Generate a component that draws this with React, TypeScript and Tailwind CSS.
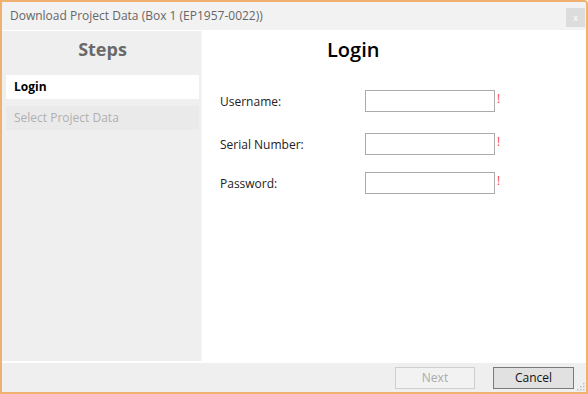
import React from 'react';

const fields = [
  { label: 'Username:', mt: 'mt-0' },
  { label: 'Serial Number:', mt: 'mt-[21px]' },
  { label: 'Password:', mt: 'mt-[17px]' },
];

const App: React.FC = () => {
  return (
    <div
      className="w-[588px] h-[394px] bg-white border-2 border-[#f0b070] rounded-tr-[4px] flex flex-col overflow-hidden"
      style={{ fontFamily: '"Open Sans", "Noto Sans", sans-serif' }}
    >
      {/* title bar */}
      <div className="h-[29px] bg-[#f2f2f2] flex items-center justify-between pl-[8px] pr-[1px] border-b border-white">
        <span className="text-[12px] text-[#666]">Download Project Data (Box 1 (EP1957-0022))</span>
        <div className="w-[19px] h-[19px] bg-[#dcdcdc] flex items-center justify-center text-[8px] text-[#f4f4f4] font-bold mt-[3px]">
          x
        </div>
      </div>

      <div className="flex flex-1 min-h-0">
        {/* steps */}
        <div className="w-[200px] bg-[#efefef] flex flex-col pl-[4px] pr-[2px] border-r border-[#f6f6f6]">
          <div className="text-[18px] font-bold text-[#6a6a6a] text-center pt-[5px] h-[44px]">Steps</div>
          <div className="h-[24px] bg-white flex items-center pl-[8px] text-[12px] font-bold text-black">Login</div>
          <div className="h-[24px] mt-[7px] bg-[#eaeaea] flex items-center pl-[8px] text-[12px] text-[#b0b0b0]">
            Select Project Data
          </div>
        </div>

        {/* form */}
        <div className="flex-1 bg-white flex flex-col">
          <div className="text-[20px] font-semibold text-black pl-[125px] pt-[4px] h-[59px]">Login</div>
          <div className="flex flex-col pl-[18px]">
            {fields.map((f) => (
              <div key={f.label} className={`flex items-center h-[22px] ${f.mt}`}>
                <span className="w-[145px] text-[12px] text-[#222] mt-[1px]">{f.label}</span>
                <div className="w-[130px] h-[22px] border border-[#ababab] bg-white" />
                <span className="ml-[2px] text-[12px] text-[#ff4040] -mt-[4px]">!</span>
              </div>
            ))}
          </div>
        </div>
      </div>

      {/* footer */}
      <div className="h-[31px] bg-[#efefef] border-t-2 border-white flex items-center justify-end gap-[18px] pr-[12px] relative">
        <div className="w-[80px] h-[22px] border border-[#cfcfcf] bg-[#f2f2f2] flex items-center justify-center text-[12px] text-[#aaa]">
          Next
        </div>
        <div className="w-[81px] h-[22px] border border-[#7a7a7a] bg-[#e1e1e1] flex items-center justify-center text-[12px] text-[#111]">
          Cancel
        </div>
        <svg className="absolute right-[1px] bottom-[1px]" width="10" height="10" viewBox="0 0 10 10">
          {[
            [8, 2], [8, 5], [5, 5], [8, 8], [5, 8], [2, 8],
          ].map(([x, y], i) => (
            <rect key={i} x={x} y={y} width="1.5" height="1.5" fill="#c0c0c0" />
          ))}
        </svg>
      </div>
    </div>
  );
};

export default App;
